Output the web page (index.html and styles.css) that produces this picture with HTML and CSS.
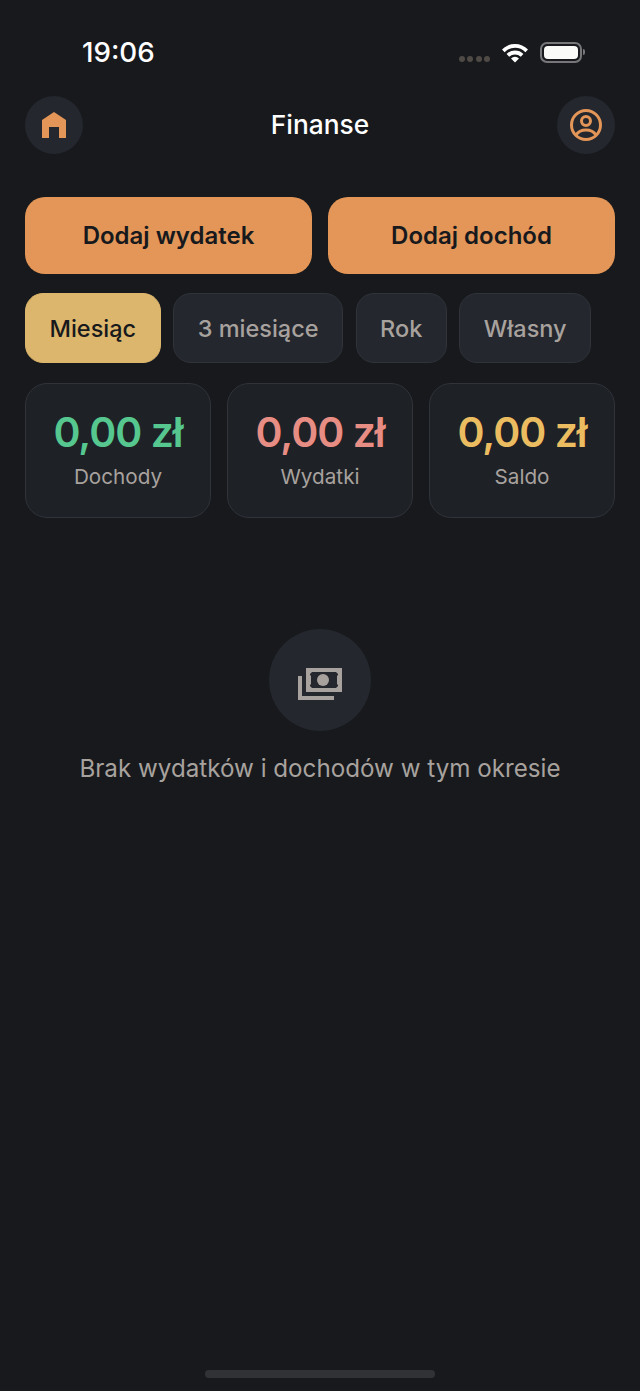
FILE: index.html
```html
<!DOCTYPE html>
<html>
<head>
  <title>Finanse</title>
  <link rel="stylesheet" href="styles.css">
</head>
<body>
  <div class="screen">
    <div class="status-bar">
      <span class="time">19:06</span>
      <div class="status-icons">
        <div class="signal"><i></i><i></i><i></i><i></i></div>
        <svg class="wifi" width="28" height="21" viewBox="0 0 28 21">
          <path d="M1 7.5 A18 18 0 0 1 27 7.5 L24.4 10.2 A14.4 14.4 0 0 0 3.6 10.2 Z" fill="#fff"/>
          <path d="M5.6 12 A12 12 0 0 1 22.4 12 L19.8 14.7 A8.4 8.4 0 0 0 8.2 14.7 Z" fill="#fff"/>
          <path d="M10 16.4 A6 6 0 0 1 18 16.4 L14 20.5 Z" fill="#fff"/>
        </svg>
        <div class="battery"><div class="battery-fill"></div></div>
        <div class="battery-cap"></div>
      </div>
    </div>

    <div class="header">
      <button class="round-btn">
        <svg width="24" height="26" viewBox="0 0 24 26">
          <path d="M12 0 L24 8 V26 H17 V15 H7 V26 H0 V8 Z" fill="#e39657"/>
        </svg>
      </button>
      <h1>Finanse</h1>
      <button class="round-btn">
        <svg width="32" height="32" viewBox="0 0 32 32" fill="none" stroke="#e39657" stroke-width="3">
          <circle cx="16" cy="16" r="14.5"/>
          <circle cx="16" cy="12" r="4.5"/>
          <path d="M6 26 C8.5 22 12 21 16 21 C20 21 23.5 22 26 26"/>
        </svg>
      </button>
    </div>

    <div class="actions">
      <button class="action-btn">Dodaj wydatek</button>
      <button class="action-btn">Dodaj dochód</button>
    </div>

    <div class="periods">
      <button class="pill active">Miesiąc</button>
      <button class="pill">3 miesiące</button>
      <button class="pill">Rok</button>
      <button class="pill">Własny</button>
    </div>

    <div class="cards">
      <div class="card">
        <div class="amount green">0,00 zł</div>
        <div class="card-label">Dochody</div>
      </div>
      <div class="card">
        <div class="amount red">0,00 zł</div>
        <div class="card-label">Wydatki</div>
      </div>
      <div class="card">
        <div class="amount yellow">0,00 zł</div>
        <div class="card-label">Saldo</div>
      </div>
    </div>

    <div class="empty">
      <div class="empty-icon">
        <svg class="money" width="44" height="32" viewBox="0 0 44 32">
          <path fill-rule="evenodd" fill="#a8a29e" d="M8 0 H44 V24 H8 Z M14 4 L12 6 V7 L13 8 V16 L12 17 V18 L14 20 H38 L40 18 V17 L39 16 V8 L40 7 V6 L38 4 Z"/>
          <circle cx="25" cy="12" r="6" fill="#a8a29e"/>
          <path d="M0 8 H4 V28 H36 V32 H0 Z" fill="#a8a29e"/>
        </svg>
      </div>
      <p>Brak wydatków i dochodów w tym okresie</p>
    </div>

    <div class="home-bar"></div>
  </div>
</body>
</html>
```

FILE: styles.css
```css
* {
  box-sizing: border-box;
}
body {
  margin: 0;
  background-color: #17191d;
  font-family: Inter, "Noto Sans", sans-serif;
}
button {
  font-family: inherit;
  cursor: pointer;
}
.screen {
  height: 1391px;
  padding: 0 25px;
  display: flex;
  flex-direction: column;
}
.status-bar {
  height: 96px;
  padding: 34px 30px 0 57px;
  display: flex;
  justify-content: space-between;
  align-items: flex-start;
}
.time {
  color: #fff;
  font-size: 27.7px;
  font-weight: 500;
  line-height: 36px;
}
.status-icons {
  display: flex;
  align-items: center;
  height: 36px;
}
.signal {
  display: flex;
  gap: 2.5px;
  margin: 13px 11px 0 0;
}
.signal i {
  width: 6px;
  height: 6px;
  border-radius: 50%;
  background: #4f4a45;
}
.wifi {
  margin-right: 11px;
}
.battery {
  width: 42px;
  height: 21px;
  border: 2px solid #77777a;
  border-radius: 7px;
  padding: 2px;
}
.battery-fill {
  height: 100%;
  background: #fafaf9;
  border-radius: 4px;
}
.battery-cap {
  width: 2px;
  height: 6px;
  margin-left: 1px;
  background: #77777a;
  border-radius: 0 2px 2px 0;
}
.header {
  height: 58px;
  display: flex;
  justify-content: space-between;
  align-items: center;
}
.header h1 {
  margin: 0 0 2px;
  color: #fff;
  font-size: 26.3px;
  font-weight: 500;
}
.round-btn {
  width: 58px;
  height: 58px;
  padding: 0;
  border: none;
  border-radius: 50%;
  background: #24272e;
  display: flex;
  align-items: center;
  justify-content: center;
}
.actions {
  margin-top: 43px;
  display: flex;
  gap: 16px;
}
.action-btn {
  flex: 1;
  height: 77px;
  border: none;
  border-radius: 20px;
  background: #e39657;
  color: #17191d;
  font-size: 24px;
  font-weight: 600;
}
.periods {
  margin-top: 19px;
  display: flex;
  gap: 12.5px;
}
.pill {
  height: 70px;
  padding: 0 23.5px;
  border: 1px solid #30333a;
  border-radius: 18px;
  background: #24272e;
  color: #a8a29e;
  font-size: 23.5px;
  font-weight: 500;
}
.pill.active {
  background: #dcb66c;
  border-color: #dcb66c;
  color: #17191d;
}
.cards {
  margin-top: 20px;
  display: flex;
  gap: 16px;
}
.card {
  flex: 1;
  height: 135px;
  padding-top: 23px;
  border: 1px solid #30333a;
  border-radius: 22px;
  background: #1e2126;
  text-align: center;
}
.amount {
  font-size: 41px;
  font-weight: 600;
  letter-spacing: -1px;
  line-height: 50px;
}
.green {
  color: #55c78f;
}
.red {
  color: #e88d83;
}
.yellow {
  color: #ecbd60;
}
.card-label {
  margin-top: 6px;
  color: #a8a29e;
  font-size: 20.7px;
  line-height: 28px;
}
.empty {
  margin-top: 111px;
  display: flex;
  flex-direction: column;
  align-items: center;
}
.empty-icon {
  width: 102px;
  height: 102px;
  border-radius: 50%;
  background: #24272e;
  display: flex;
  align-items: center;
  justify-content: center;
}
.money {
  margin-top: 8px;
}
.empty p {
  margin: 21px 0 0;
  color: #a8a29e;
  font-size: 24.2px;
  line-height: 34px;
}
.home-bar {
  width: 230px;
  height: 8px;
  margin: auto auto 13px;
  border-radius: 4px;
  background: #303236;
}
```
